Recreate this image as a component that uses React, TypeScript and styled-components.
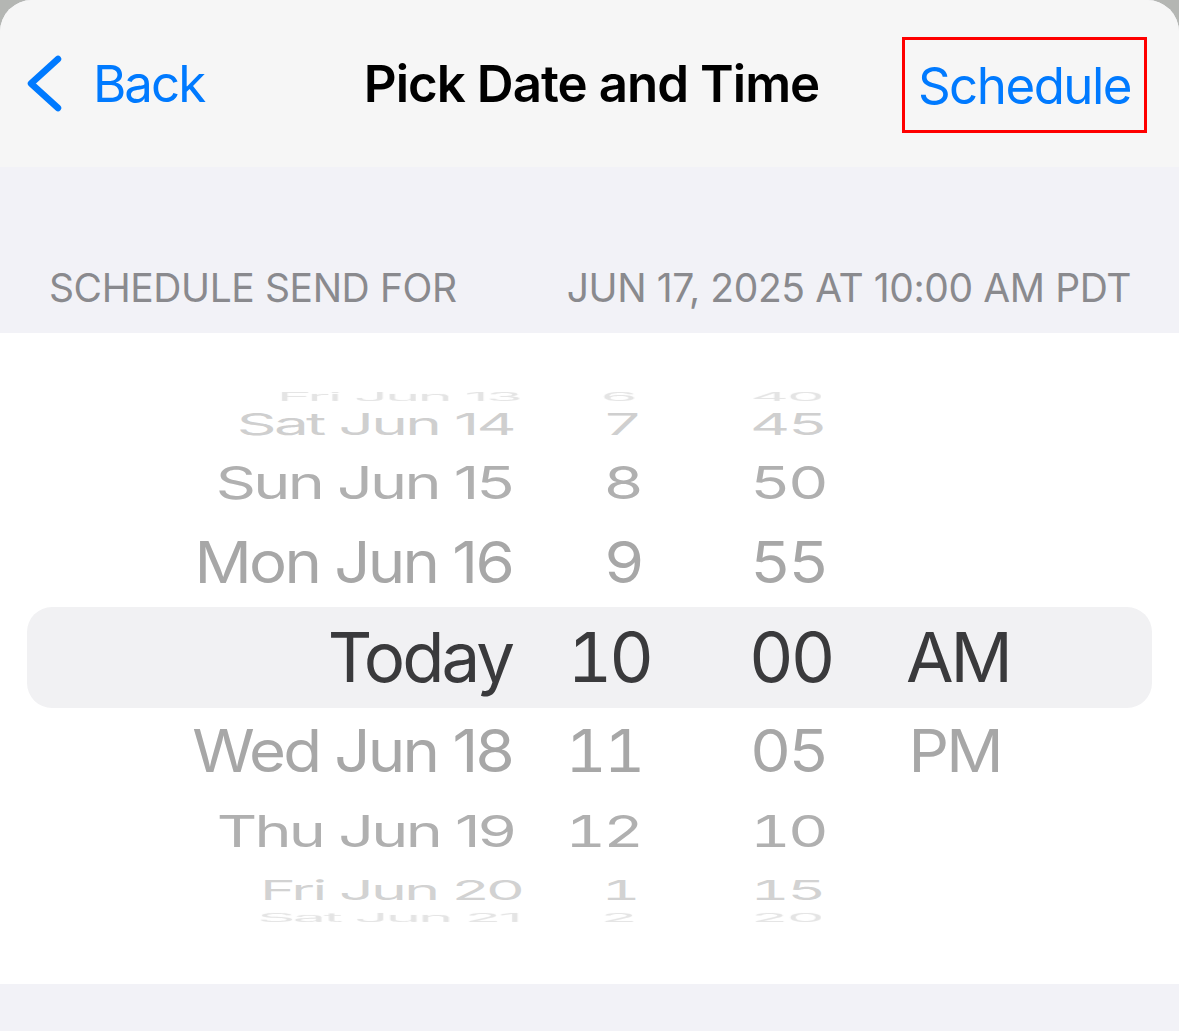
import React from "react";
import styled, { createGlobalStyle } from "styled-components";

const GlobalStyle = createGlobalStyle`
  html, body {
    margin: 0;
    padding: 0;
    background: #b4b6b3;
    font-family: Inter, "Noto Sans", "Liberation Sans", sans-serif;
  }
  * { box-sizing: border-box; }
`;

const Sheet = styled.div`
  min-height: 1031px;
  background: #f2f2f7;
  border-radius: 32px 32px 0 0;
  overflow: hidden;
  display: flex;
  flex-direction: column;
`;

const NavBar = styled.header`
  height: 167px;
  background: #f6f6f6;
  display: grid;
  grid-template-columns: 1fr auto 1fr;
  align-items: center;
  padding: 0 26px;
`;

const BackButton = styled.div`
  display: flex;
  align-items: center;
  gap: 31px;
  color: #007aff;
  font-size: 51px;
  line-height: 61px;
  letter-spacing: -2px;
  justify-self: start;
`;

const Title = styled.h1`
  margin: 0;
  font-size: 51px;
  line-height: 61px;
  font-weight: 600;
  color: #000;
  letter-spacing: -0.95px;
  transform: translateX(2px);
`;

const ScheduleButton = styled.div`
  justify-self: end;
  width: 245px;
  height: 96px;
  margin: 3px 6px 0 0;
  border: 3px solid #ff0000;
  display: flex;
  align-items: center;
  justify-content: center;
  color: #007aff;
  font-size: 51px;
  line-height: 61px;
  letter-spacing: -1.5px;
`;

const SectionHeader = styled.div`
  display: flex;
  justify-content: space-between;
  padding: 97px 48px 22px 49px;
  font-size: 39px;
  line-height: 47px;
  letter-spacing: -0.4px;
  color: #8a8a8e;
  text-transform: uppercase;
`;

const PickerPanel = styled.section`
  background: #ffffff;
  height: 651px;
  padding-top: 59px;
`;

const Wheel = styled.div`
  height: 530px;
  overflow: hidden;
  display: flex;
  flex-direction: column;
`;

const Row = styled.div<{ $selected?: boolean; $color: string }>`
  flex: none;
  margin: 0 27px;
  display: grid;
  grid-template-columns: 485px 139px 255px 1fr;
  align-items: center;
  font-size: 69px;
  letter-spacing: -3px;
  white-space: nowrap;
  color: ${(p) => p.$color};
  background: ${(p) => (p.$selected ? "#f1f1f3" : "transparent")};
  border-radius: ${(p) => (p.$selected ? "25px" : "0")};
  transform-origin: 50% 50%;
`;

const DateCell = styled.span`
  text-align: right;
  transform-origin: 100% 50%;
`;

const HourCell = styled.span`
  text-align: right;
  font-variant-numeric: tabular-nums;
  transform-origin: 30px 50%;
`;

const MinuteCell = styled.span`
  padding-left: 98px;
  font-variant-numeric: tabular-nums;
  transform-origin: 109px 50%;
`;

const PeriodCell = styled.span`
  text-align: left;
  transform-origin: 30px 50%;
`;

const BottomFill = styled.div`
  flex: 1;
  background: #f2f2f7;
`;

type WheelRow = {
  date: string;
  hour: string;
  minute: string;
  period?: string;
  height: number;
  scaleY: number;
  scaleX: number;
  shift: number;
  color: string;
  selected?: boolean;
};

const rows: WheelRow[] = [
  { date: "Fri Jun 13", hour: "6", minute: "40", height: 9.5, scaleY: 0.16, scaleX: 0.86, shift: 8, color: "#e4e4e4" },
  { date: "Sat Jun 14", hour: "7", minute: "45", height: 45, scaleY: 0.44, scaleX: 0.9, shift: 2, color: "#cfcfcf" },
  { date: "Sun Jun 15", hour: "8", minute: "50", height: 71, scaleY: 0.66, scaleX: 0.91, shift: 0, color: "#b0b0b0" },
  { date: "Mon Jun 16", hour: "9", minute: "55", height: 89, scaleY: 0.84, scaleX: 0.92, shift: 0, color: "#a7a7a7" },
  { date: "Today", hour: "10", minute: "00", period: "AM", height: 101, scaleY: 1, scaleX: 1, shift: 0, color: "#3a3a3c", selected: true },
  { date: "Wed Jun 18", hour: "11", minute: "05", period: "PM", height: 87, scaleY: 0.85, scaleX: 0.92, shift: 0, color: "#a7a7a7" },
  { date: "Thu Jun 19", hour: "12", minute: "10", height: 73, scaleY: 0.64, scaleX: 0.91, shift: 2, color: "#b0b0b0" },
  { date: "Fri Jun 20", hour: "1", minute: "15", height: 45, scaleY: 0.4, scaleX: 0.88, shift: 10, color: "#d2d2d2" },
  { date: "Sat Jun 21", hour: "2", minute: "20", height: 9.5, scaleY: 0.16, scaleX: 0.86, shift: 8, color: "#e4e4e4" },
];

const Chevron = () => (
  <svg width="36" height="60" viewBox="0 0 36 60" fill="none">
    <path
      d="M32 5 L5 29.5 L32 54"
      stroke="#007aff"
      strokeWidth="6.5"
      strokeLinecap="round"
      strokeLinejoin="round"
    />
  </svg>
);

export default function App() {
  return (
    <>
      <GlobalStyle />
      <Sheet>
        <NavBar>
          <BackButton>
            <Chevron />
            <span>Back</span>
          </BackButton>
          <Title>Pick Date and Time</Title>
          <ScheduleButton>Schedule</ScheduleButton>
        </NavBar>
        <SectionHeader>
          <span>Schedule send for</span>
          <span>Jun 17, 2025 at 10:00 AM PDT</span>
        </SectionHeader>
        <PickerPanel>
          <Wheel>
            {rows.map((r) => {
              const sx = { transform: `scaleX(${r.scaleX})` };
              return (
                <Row
                  key={r.date}
                  $selected={r.selected}
                  $color={r.color}
                  style={{
                    height: `${r.height}px`,
                    lineHeight: `${r.height}px`,
                    transform: `scaleY(${r.scaleY})`,
                  }}
                >
                  <DateCell style={{ transform: `translateX(${r.shift}px) scaleX(${r.scaleX})` }}>
                    {r.date}
                  </DateCell>
                  <HourCell style={sx}>{r.hour}</HourCell>
                  <MinuteCell style={sx}>{r.minute}</MinuteCell>
                  <PeriodCell style={sx}>{r.period ?? ""}</PeriodCell>
                </Row>
              );
            })}
          </Wheel>
        </PickerPanel>
        <BottomFill />
      </Sheet>
    </>
  );
}
